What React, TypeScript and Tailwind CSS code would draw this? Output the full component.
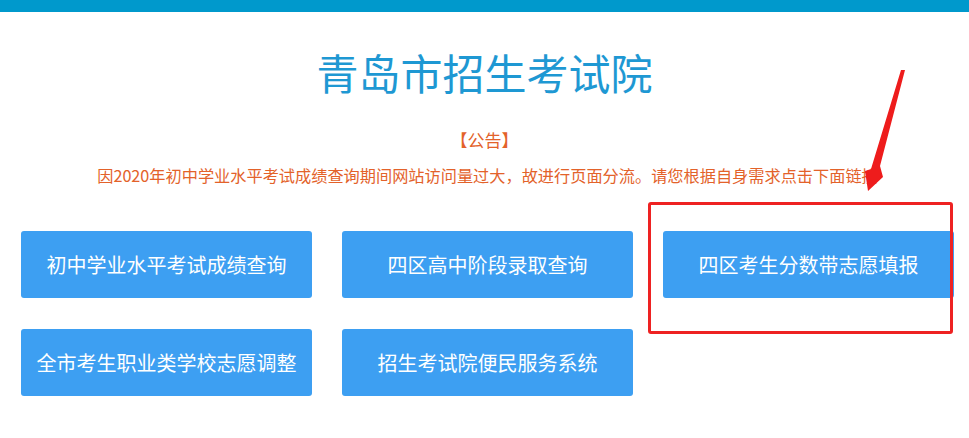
import React from "react";

const links = [
  "初中学业水平考试成绩查询",
  "四区高中阶段录取查询",
  "四区考生分数带志愿填报",
  "全市考生职业类学校志愿调整",
  "招生考试院便民服务系统",
];

export default function App() {
  return (
    <div
      className="relative w-[969px] h-[438px] overflow-hidden bg-white"
      style={{ fontFamily: '"Microsoft YaHei", "Noto Sans CJK SC", "Noto Sans", sans-serif' }}
    >
      <div className="h-[12px] bg-[#0099cc]" />

      <h1 className="mt-[39px] text-center text-[42px] leading-none font-normal text-[#1e98d3]">
        青岛市招生考试院
      </h1>

      <p className="mt-[35px] text-center text-[17px] leading-[24px] text-[#e3622a]">【公告】</p>
      <p className="mt-[11px] pl-[6px] text-center text-[16.2px] leading-[24px] whitespace-nowrap text-[#e3622a]">
        因2020年初中学业水平考试成绩查询期间网站访问量过大，故进行页面分流。请您根据自身需求点击下面链接
      </p>

      <div className="mt-[44px] pl-[21px] flex flex-wrap gap-x-[30px] gap-y-[31px]">
        {links.map((t) => (
          <a
            key={t}
            href="#"
            className="w-[291px] h-[67px] flex items-center justify-center rounded-[3px] bg-[#3d9ff2] text-white text-[20px]"
          >
            {t}
          </a>
        ))}
      </div>

      {/* annotation: highlight box + arrow */}
      <div className="absolute left-[648px] top-[202px] w-[305px] h-[132px] border-[3px] border-[#ee2222] rounded-[3px] pointer-events-none" />
      <svg className="absolute left-0 top-0 pointer-events-none" width="969" height="438">
        <polygon
          points="901,70 905,70 880,166 883,177 868,191 865,171 871,169"
          fill="#ee1c1c"
        />
      </svg>
    </div>
  );
}
